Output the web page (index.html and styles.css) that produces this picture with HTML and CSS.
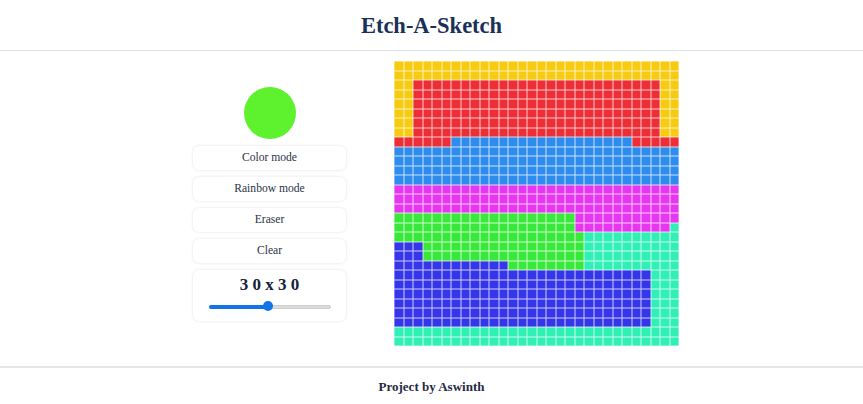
FILE: index.html
```html
<!DOCTYPE html>
<html lang="en">
<head>
<meta charset="utf-8">
<title>Etch-A-Sketch</title>
<link rel="stylesheet" href="styles.css">
</head>
<body>
<header class="header"><h1 class="title">Etch-A-Sketch</h1></header>
<main class="main">
  <section class="controls">
    <div class="swatch"></div>
    <button class="btn">Color mode</button>
    <button class="btn">Rainbow mode</button>
    <button class="btn">Eraser</button>
    <button class="btn">Clear</button>
    <div class="size-card">
      <div class="size-label">3 0 x 3 0</div>
      <div class="slider"><div class="slider-fill"></div><div class="slider-thumb"></div></div>
    </div>
  </section>
  <section class="board" id="board"></section>
</main>
<footer class="footer"><p class="credit">Project by Aswinth</p></footer>
<script src="script.js"></script>
</body>
</html>
```
FILE: styles.css
```css
* { box-sizing: border-box; }
body {
  margin: 0;
  background: #fff;
  font-family: "Liberation Serif", "Times New Roman", serif;
  color: #1f2f4a;
}
.header {
  height: 51px;
  border-bottom: 1px solid #dfe2e6;
  display: flex;
  align-items: center;
  justify-content: center;
}
.title {
  margin: 0;
  font-size: 22.5px;
  font-weight: 700;
  color: #1a3157;
  padding-top: 1px;
}
.main {
  height: 305px;
  margin-bottom: 10px;
  display: flex;
  align-items: center;
  gap: 48px;
  padding-left: 193px;
}
.controls {
  width: 153px;
  display: flex;
  flex-direction: column;
  align-items: stretch;
  gap: 7px;
}
.swatch {
  width: 52px;
  height: 52px;
  border-radius: 50%;
  background: #5ef22e;
  align-self: center;
}
.btn {
  height: 24px;
  border: none;
  background: #fff;
  border-radius: 6px;
  box-shadow: 0 0 3px rgba(0,0,0,0.12);
  font-family: "Liberation Serif", "Times New Roman", serif;
  font-size: 11.6px;
  color: #2a3346;
  padding: 0;
}
.size-card {
  height: 51px;
  background: #fff;
  border-radius: 6px;
  box-shadow: 0 0 3px rgba(0,0,0,0.12);
  display: flex;
  flex-direction: column;
  align-items: center;
  padding-top: 5px;
}
.size-label {
  font-size: 17px;
  font-weight: 700;
  color: #14213a;
}
.slider {
  position: relative;
  width: 122px;
  height: 4px;
  margin-top: 10px;
  background: #dcdcdc;
  border-radius: 2px;
  border: 1px solid #cfcfcf;
}
.slider-fill {
  width: 58px;
  height: 4px;
  margin-top: -1px;
  margin-left: -1px;
  background: #1374e8;
  border-radius: 2px;
}
.slider-thumb {
  position: absolute;
  left: 53px;
  top: -5px;
  width: 10px;
  height: 10px;
  border-radius: 50%;
  background: #1374e8;
}
.board {
  width: 285px;
  height: 285px;
  display: grid;
  grid-template-columns: repeat(30, 1fr);
  grid-template-rows: repeat(30, 1fr);
}
.cell { box-shadow: inset 0 0 0 0.5px rgba(255,255,255,0.75); }
.c-y { background: #f7cb10; }
.c-r { background: #ee2e36; }
.c-b { background: #2e8cee; }
.c-m { background: #e637f0; }
.c-g { background: #38e83a; }
.c-t { background: #30f0b5; }
.c-d { background: #3535ea; }
.footer {
  height: 38px;
  border-top: 2px solid #e6e6e6;
  display: flex;
  align-items: center;
  justify-content: center;
}
.credit {
  margin: 0;
  font-size: 13px;
  font-weight: 700;
  color: #1f2a44;
  padding-top: 2px;
}
```
FILE: script.js
```js
(function () {
  var board = document.getElementById('board');
  function colorAt(r, c) {
    if (r < 2) return 'y';
    if (r < 8) return (c < 2 || c > 27) ? 'y' : 'r';
    if (r === 8) return (c < 6 || c > 24) ? 'r' : 'b';
    if (r < 13) return 'b';
    if (r < 16) return 'm';
    if (r === 16) return c < 19 ? 'g' : 'm';
    if (r === 17) return c < 19 ? 'g' : (c < 29 ? 'm' : 't');
    if (r === 18) return c < 20 ? 'g' : 't';
    if (r < 21) return c < 3 ? 'd' : (c < 20 ? 'g' : 't');
    if (r === 21) return c < 12 ? 'd' : (c < 20 ? 'g' : 't');
    if (r < 28) return c < 27 ? 'd' : 't';
    return 't';
  }
  var frag = document.createDocumentFragment();
  for (var r = 0; r < 30; r++) {
    for (var c = 0; c < 30; c++) {
      var d = document.createElement('div');
      d.className = 'cell c-' + colorAt(r, c);
      frag.appendChild(d);
    }
  }
  board.appendChild(frag);
})();
```
